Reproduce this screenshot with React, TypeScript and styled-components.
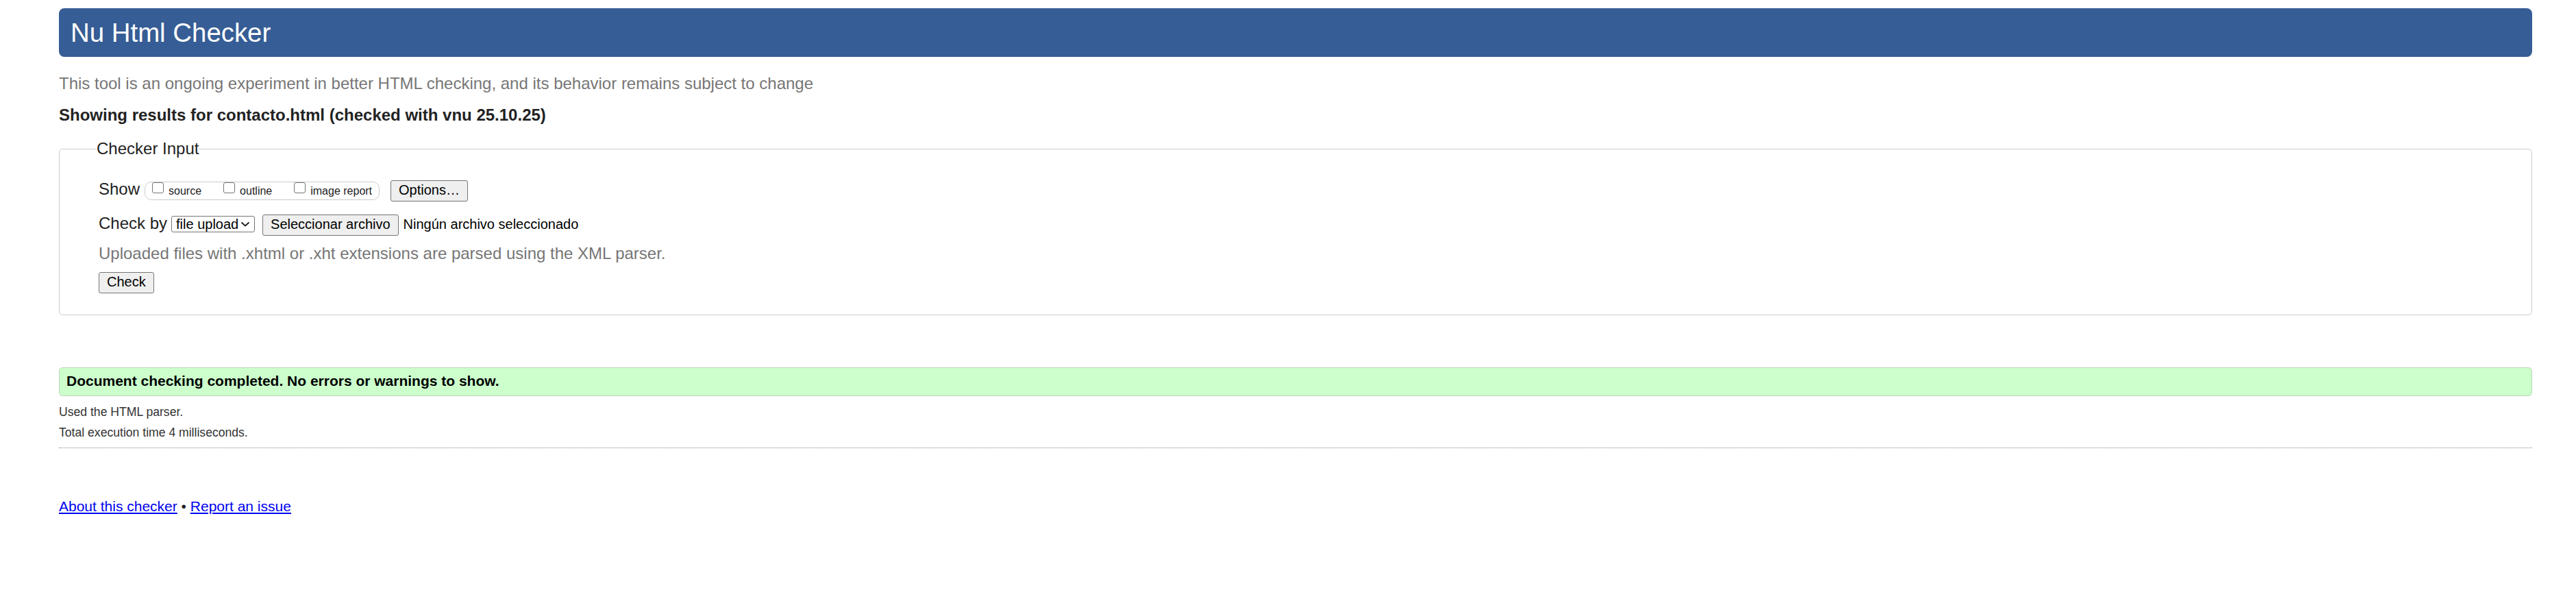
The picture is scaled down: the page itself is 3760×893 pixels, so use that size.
import React from "react";
import styled, { createGlobalStyle } from "styled-components";

const GlobalStyle = createGlobalStyle`
  html, body {
    margin: 0;
    padding: 0;
    background: #fff;
  }
  body {
    font-family: "Liberation Sans", Arial, Helvetica, sans-serif;
    color: #222;
  }
`;

const Page = styled.div`
  padding: 12px 64px 40px 86px;
`;

const Banner = styled.h1`
  margin: 0;
  height: 71px;
  padding: 0 17px;
  background: #365d95;
  color: #fff;
  font-size: 38.4px;
  font-weight: normal;
  line-height: 71px;
  border-radius: 8px;
`;

const Intro = styled.p`
  margin: 25px 0 0;
  font-size: 24px;
  line-height: 28px;
  color: #767676;
`;

const ResultsHeading = styled.h2`
  margin: 18px 0 0;
  font-size: 24px;
  line-height: 28px;
  font-weight: bold;
  color: #222;
`;

const Fieldset = styled.fieldset`
  margin: 21px 0 0;
  padding: 31px 20px 31px 57px;
  border: 1px solid #ccc;
  border-radius: 5px;
  min-inline-size: 0;
`;

const Legend = styled.legend`
  margin-left: -3px;
  padding: 0;
  font-size: 24px;
  line-height: 28px;
  color: #222;
`;

const Row = styled.div<{ $gap: number }>`
  display: flex;
  align-items: baseline;
  margin-top: ${(p) => p.$gap}px;
`;

const FieldLabel = styled.span<{ $space: number }>`
  font-size: 24px;
  line-height: 28px;
  color: #222;
  margin-right: ${(p) => p.$space}px;
`;

const OptionGroup = styled.span`
  display: inline-flex;
  align-items: baseline;
  height: 27px;
  box-sizing: border-box;
  padding: 0 10px;
  border: 1px solid #ccc;
  border-radius: 10px;
  margin-right: 16px;
`;

const OptionItem = styled.label<{ $last?: boolean }>`
  display: inline-flex;
  align-items: baseline;
  gap: 7px;
  margin-right: ${(p) => (p.$last ? 0 : 32)}px;
  font-size: 16px;
  line-height: 25px;
  color: #222;
`;

const Checkbox = styled.input`
  appearance: none;
  -webkit-appearance: none;
  align-self: flex-start;
  width: 17px;
  height: 16px;
  margin: 0;
  box-sizing: border-box;
  border: 1px solid #767676;
  border-radius: 3px;
  background: #fff;
`;

const Button = styled.button<{ $space?: number }>`
  height: 31px;
  box-sizing: border-box;
  padding: 0 11px 3px;
  margin: 0 ${(p) => p.$space ?? 0}px 0 0;
  font-family: inherit;
  font-size: 20px;
  line-height: 26px;
  color: #000;
  background: #efefef;
  border: 1px solid #767676;
  border-radius: 3px;
`;

const SelectWrap = styled.span`
  position: relative;
  display: inline-flex;
  margin-right: 11px;
`;

const Select = styled.select`
  appearance: none;
  -webkit-appearance: none;
  width: 122px;
  height: 24px;
  box-sizing: border-box;
  padding: 0 0 0 6px;
  border: 1px solid #767676;
  border-radius: 3px;
  background: #fff;
  font-family: inherit;
  font-size: 20px;
  line-height: 22px;
  color: #000;
`;

const Chevron = styled.svg`
  position: absolute;
  right: 7px;
  top: 8px;
  pointer-events: none;
`;

const FileName = styled.span`
  font-size: 20px;
  line-height: 26px;
  color: #000;
`;

const Hint = styled.p`
  margin: 12px 0 0;
  font-size: 24px;
  line-height: 28px;
  color: #767676;
`;

const SuccessBox = styled.div`
  margin-top: 76px;
  padding: 7px 10px 9px;
  border: 1px solid #bcd6bc;
  border-radius: 5px;
  background: #ccffcc;
  font-size: 21px;
  line-height: 24px;
  font-weight: bold;
  color: #000;
`;

const Detail = styled.p<{ $gap: number }>`
  margin: ${(p) => p.$gap}px 0 0;
  font-size: 17.6px;
  line-height: 22px;
  color: #333;
`;

const Divider = styled.hr`
  margin: 11px 0 0;
  height: 0;
  border: 0;
  border-top: 1px dotted #888;
`;

const Footer = styled.p`
  margin: 73px 0 0;
  font-size: 21px;
  line-height: 24px;
  color: #222;
`;

const Link = styled.a`
  color: #0000ee;
  text-decoration: underline;
`;

export default function App() {
  return (
    <>
      <GlobalStyle />
      <Page>
        <Banner>Nu Html Checker</Banner>
        <Intro>
          This tool is an ongoing experiment in better HTML checking, and its
          behavior remains subject to change
        </Intro>
        <ResultsHeading>
          Showing results for contacto.html (checked with vnu 25.10.25)
        </ResultsHeading>
        <Fieldset>
          <Legend>Checker Input</Legend>
          <Row $gap={0}>
            <FieldLabel $space={7}>Show</FieldLabel>
            <OptionGroup>
              <OptionItem>
                <Checkbox type="checkbox" />
                <span>source</span>
              </OptionItem>
              <OptionItem>
                <Checkbox type="checkbox" />
                <span>outline</span>
              </OptionItem>
              <OptionItem $last>
                <Checkbox type="checkbox" />
                <span>image report</span>
              </OptionItem>
            </OptionGroup>
            <Button type="button">Options…</Button>
          </Row>
          <Row $gap={18}>
            <FieldLabel $space={6}>Check by</FieldLabel>
            <SelectWrap>
              <Select defaultValue="file">
                <option value="address">address</option>
                <option value="file">file upload</option>
                <option value="text">text input</option>
              </Select>
              <Chevron width="14" height="8" viewBox="0 0 14 8">
                <polyline
                  points="1.5,1.5 7,6.5 12.5,1.5"
                  fill="none"
                  stroke="#222"
                  strokeWidth="2"
                />
              </Chevron>
            </SelectWrap>
            <Button type="button" $space={7}>
              Seleccionar archivo
            </Button>
            <FileName>Ningún archivo seleccionado</FileName>
          </Row>
          <Hint>
            Uploaded files with .xhtml or .xht extensions are parsed using the
            XML parser.
          </Hint>
          <Row $gap={13}>
            <Button type="submit">Check</Button>
          </Row>
        </Fieldset>
        <SuccessBox>
          Document checking completed. No errors or warnings to show.
        </SuccessBox>
        <Detail $gap={12}>Used the HTML parser.</Detail>
        <Detail $gap={8}>Total execution time 4 milliseconds.</Detail>
        <Divider />
        <Footer>
          <Link href="#">About this checker</Link> •{" "}
          <Link href="#">Report an issue</Link>
        </Footer>
      </Page>
    </>
  );
}
